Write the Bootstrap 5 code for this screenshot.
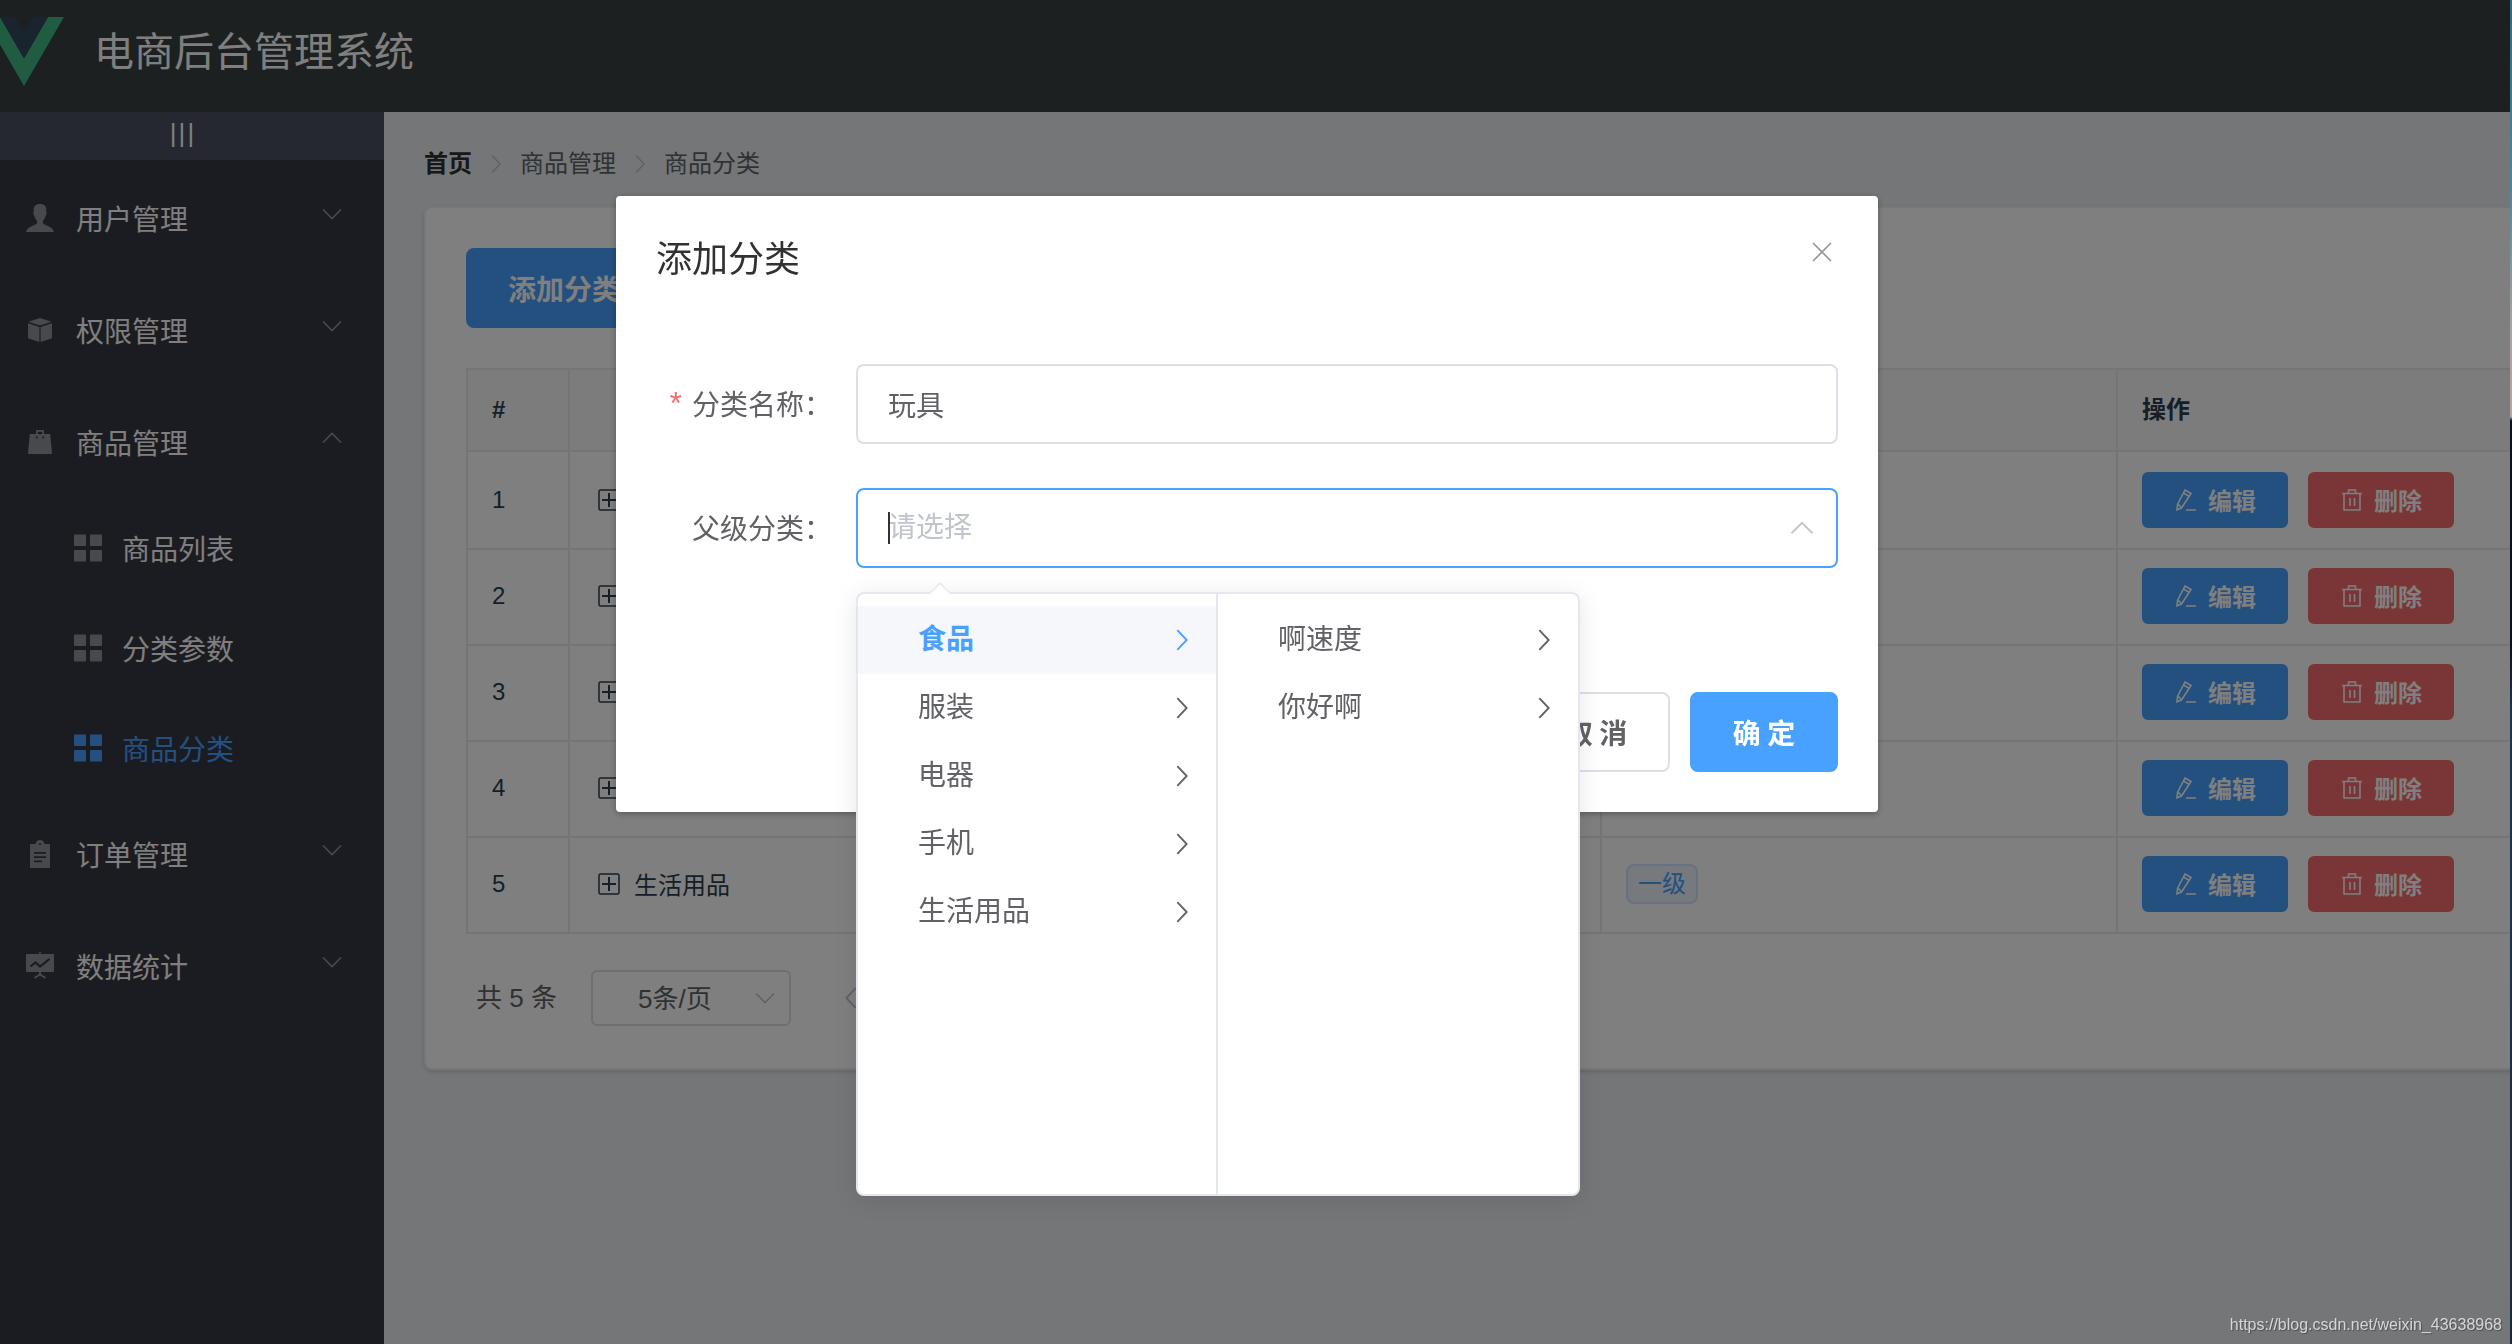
<!DOCTYPE html>
<html lang="zh-CN">
<head>
<meta charset="utf-8">
<meta name="viewport" content="width=device-width, initial-scale=1">
<title>电商后台管理系统</title>
<link rel="stylesheet" href="https://cdn.jsdelivr.net/npm/bootstrap@5.3.0/dist/css/bootstrap.min.css">
<style>
  :root {
    --el-primary: #48a0ff;
    --el-danger: #f56c6c;
    --el-muted: #909399;
    --el-text: #606266;
    --el-border: #dcdfe6;
    --cjk: "Noto Sans CJK SC", sans-serif;
  }
  body {
    font-family: "Liberation Sans", "Noto Sans CJK SC", sans-serif;
    font-size: 28px;
    line-height: 40px;
    color: #2c3e50;
    overflow: hidden;
  }
  svg { display: block; flex: none; }
  .line-icon { fill: none; stroke: currentColor; stroke-width: 1.6; }
  a { text-decoration: none; }

  /* frame */
  .app-page { background: #eaedf1; }
  .app-header { height: 112px; background: #3a4041; color: #fff; font-family: var(--cjk); font-size: 40px; line-height: 36px; gap: 30px; padding-bottom: 10px; overflow: hidden; }
  .app-logo { margin-left: -16px; }
  .app-aside { width: 384px; flex: none; background: #363842; font-family: var(--cjk); }
  .aside-toggle { height: 48px; background: #4a5060; color: #fff; font-family: "Liberation Sans", sans-serif; font-size: 26px; line-height: 42px; gap: 2px; border: 0; padding: 0 20px 0 0; }
  .app-main { padding: 30px 40px; min-width: 0; overflow: hidden; }

  /* side menu */
  .side-link { height: 112px; padding: 4px 40px 0 16px; color: #fff; }
  .side-link .side-icon { width: 48px; margin-right: 12px; color: var(--el-muted); display: flex; justify-content: center; }
  .side-link .side-arrow { color: var(--el-muted); margin: 0 0 8px auto; }
  .side-sub .side-link { height: 100px; padding-left: 64px; }
  .side-sub .side-link .side-icon { margin-right: 10px; }
  .side-link.active, .side-link.active .side-icon { color: var(--el-primary); }

  /* content */
  .crumbs { font-size: 24px; line-height: 24px; margin: 10px 0 30px; gap: 12px; color: var(--el-text); }
  .crumbs a { color: #303133; font-weight: 700; }
  .crumbs svg { color: #c0c4cc; }
  .list-card { border: 2px solid #ebeef5; border-radius: 8px; padding: 40px 40px 42px; width: max-content; background: #fff; box-shadow: 0 2px 4px rgba(0,0,0,.15); }
  .el-btn { --bs-btn-font-family: var(--cjk); --bs-btn-font-size: 28px; --bs-btn-line-height: 36px; --bs-btn-padding-x: 40px; --bs-btn-padding-y: 20px; --bs-btn-border-width: 2px; --bs-btn-border-radius: 8px; --bs-btn-font-weight: 700; }
  .el-btn-sm { --bs-btn-font-size: 24px; --bs-btn-line-height: 24px; --bs-btn-padding-x: 30px; --bs-btn-padding-y: 14px; --bs-btn-border-radius: 6px; gap: 10px; }
  .row-actions { gap: 20px; }
  .btn-main { --bs-btn-bg: var(--el-primary); --bs-btn-border-color: var(--el-primary); --bs-btn-color: #fff; --bs-btn-hover-bg: #66b1ff; --bs-btn-hover-color: #fff; }
  .btn-del { --bs-btn-bg: var(--el-danger); --bs-btn-border-color: var(--el-danger); --bs-btn-color: #fff; --bs-btn-hover-bg: #f78989; --bs-btn-hover-color: #fff; }
  .btn-plain { --bs-btn-bg: #fff; --bs-btn-border-color: var(--el-border); --bs-btn-color: var(--el-text); }

  .cate-table { table-layout: fixed; width: 2170px; margin: 40px 0 36px; border: 2px solid #e8eaec; border-collapse: separate; border-spacing: 0; font-size: 24px; line-height: 36px; }
  .cate-table th, .cate-table td { padding: 0 24px; vertical-align: middle; border-right: 2px solid #e8eaec; }
  .cate-table th { height: 82px; background: #f8f8f9; border-bottom: 2px solid #e8eaec; }
  .cate-table td { height: 96px; }
  .cate-table tr + tr td { border-top: 2px solid #e8eaec; padding-bottom: 2px; }
  .cate-name { font-family: var(--cjk); gap: 14px; padding-left: 4px; }
  .col-num { width: 102px; }
  .level-tag { display: block; width: max-content; height: 40px; line-height: 36px; padding: 0 10px; border: 2px solid #d0e5ff; border-radius: 8px; background: #ecf5ff; color: var(--el-primary); }
  .pager { font-size: 26px; line-height: 54px; color: var(--el-text); padding-left: 10px; gap: 34px; height: 56px; }
  .size-picker { width: 200px; height: 56px; border: 2px solid var(--el-border); border-radius: 6px; }
  .size-picker select { appearance: none; border: 0; background: none; display: block; width: 100%; height: 50px; padding: 0 32px 0 0; text-align: center; text-align-last: center; color: var(--el-text); font-size: 26px; }
  .size-picker svg { position: absolute; right: 12px; top: 14px; color: #c0c4cc; pointer-events: none; }
  .page-btn { border: 0; background: none; padding: 0 12px; color: #c0c4cc; }

  /* dialog */
  .modal-backdrop.show { opacity: .5; }
  .cate-modal { padding-right: 18px; }
  .cate-modal .modal-dialog { max-width: 1262px; margin: 196px auto; }
  .cate-modal .modal-content { border: 0; border-radius: 4px; box-shadow: 0 2px 6px rgba(0,0,0,.3); color: var(--el-text); }
  .cate-modal .modal-header { padding: 40px 40px 20px; border: 0; align-items: flex-start; }
  .cate-modal .modal-title { font-size: 36px; line-height: 48px; color: #303133; font-weight: 400; }
  .modal-x { border: 0; background: none; padding: 0; color: var(--el-muted); margin: 4px 4px 0 0; }
  .cate-modal .modal-body { padding: 60px 40px; }
  .cate-modal .modal-footer { padding: 20px 40px 40px; border: 0; gap: 20px; }
  .cate-modal .modal-footer > * { margin: 0; }
  .cate-modal .modal-footer .btn { min-width: 148px; }
  .field-row { margin-bottom: 44px; }
  .field-label { width: 200px; padding-right: 24px; line-height: 78px; gap: 10px; font-family: var(--cjk); }
  .field-label .must { color: var(--el-danger); font-family: "Liberation Sans", sans-serif; font-size: 32px; }
  .field-input { height: 80px; padding: 0 30px; border: 2px solid var(--el-border); border-radius: 8px; font-size: 28px; color: var(--el-text); }
  .field-input::placeholder { color: #c0c4cc; }
  .field-input.is-open { border-color: var(--el-primary); }
  .field-arrow { position: absolute; right: 22px; top: 26px; color: #c0c4cc; }
  .field-caret { position: absolute; left: 32px; top: 24px; width: 2px; height: 32px; background: #303133; }

  /* cascader popup */
  .cascader { position: absolute; top: 104px; left: 0; border: 2px solid #e4e7ed; border-radius: 8px; background: #fff; box-shadow: 0 4px 24px rgba(0,0,0,.1); }
  .cascader-tip { position: absolute; left: 72px; top: -12px; }
  .cascader-col { width: 360px; height: 600px; padding-top: 12px; }
  .cascader-col:first-of-type { border-right: 2px solid #e4e7ed; }
  .cascader-item { height: 68px; padding: 0 20px 0 60px; color: var(--el-text); }
  .cascader-item.active { background: #f5f7fa; color: var(--el-primary); font-weight: 700; }

  .site-mark { position: fixed; right: 10px; bottom: 5px; z-index: 2000; font-size: 16px; line-height: 28px; color: rgba(255,255,255,.72); text-shadow: 1px 1px 1px rgba(0,0,0,.35); }
  .desk-edge { position: fixed; top: 0; right: 0; bottom: 0; width: 2px; z-index: 2001; background: linear-gradient(#2f6f80 0, #4c8794 14%, #a8a3a2 24%, #b5a5a0 31%, #07131c 31.3%, #07131c 48%, #22344c 53%, #1a2a3e 100%); }
</style>
</head>
<body>
<svg class="d-none" xmlns="http://www.w3.org/2000/svg">
  <symbol id="i-down" viewBox="0 0 24 24"><path d="M3 7.500l9 9 9-9"/></symbol>
  <symbol id="i-up" viewBox="0 0 24 24"><path d="M3 16.500l9-9 9 9"/></symbol>
  <symbol id="i-right" viewBox="0 0 24 24"><path d="M8 3.500l8 8.500-8 8.500"/></symbol>
  <symbol id="i-left" viewBox="0 0 24 24"><path d="M16 3.500L8 12l8 8.500"/></symbol>
  <symbol id="i-user" viewBox="0 0 28 28"><path fill="currentColor" d="M14 0c4 0 6.300 2 6.300 6 0 1.500-.1 2 .3 3 .3 1.500-.8 2.500-1.200 3.500-.5 2-1.400 3.200-2.400 4.500v2.300c1.800 2.200 9.300 2.700 11 8.700H0c1.700-6 9.200-6.500 11-8.700V17c-1-1.300-1.900-2.500-2.400-4.500C8.200 11.500 7.100 10.500 7.400 9c.4-1 .3-1.500.3-3 0-4 2.300-6 6.300-6z"/></symbol>
  <symbol id="i-box" viewBox="0 0 28 28"><path fill="currentColor" d="M14 2l11.500 3.800L14 9.600 2.500 5.800zM2 7.300l11.400 3.800V26L2 22.300zM26 7.300v15l-11.400 3.700V11.100z"/></symbol>
  <symbol id="i-bag" viewBox="0 0 28 28"><path fill="currentColor" fill-rule="evenodd" d="M10 6V2h8v4h6.200L26 24.500c0 1-.5 1.500-1.500 1.500h-21C2.500 26 2 25.500 2 24.500L3.800 6zm1.800-2.200V6h4.400V3.800zM9.800 8.500v1.800h2V8.500zm6.400 0v1.800h2V8.500z"/></symbol>
  <symbol id="i-grid" viewBox="0 0 28 28"><g fill="currentColor"><rect width="12" height="11.500" x="0" y=".5" rx="1"/><rect width="12" height="11.500" x="16" y=".5" rx="1"/><rect width="12" height="11.500" x="0" y="16" rx="1"/><rect width="12" height="11.500" x="16" y="16" rx="1"/></g></symbol>
  <symbol id="i-order" viewBox="0 0 28 28"><path fill="currentColor" fill-rule="evenodd" d="M9.500 4C10 1.500 12 0 14 0s4 1.500 4.500 4H23c.6 0 1 .4 1 1v22c0 .6-.4 1-1 1H5c-.6 0-1-.4-1-1V5c0-.6.4-1 1-1zM13 3v1.800h2V3zM8 12v1.800h12V12zm0 4.300V18h12v-1.700zm0 4.200v1.800h8v-1.800z"/></symbol>
  <symbol id="i-chart" viewBox="0 0 28 28"><path fill="currentColor" d="M13.200 0h1.600v2H27c.6 0 1 .4 1 1v16c0 .6-.4 1-1 1H1c-.6 0-1-.4-1-1V3c0-.6.4-1 1-1h12.200z"/><path fill="none" stroke="#363842" stroke-width="2.200" d="M4.500 14.500l5-4 4.500 4L23.500 7"/><path fill="none" stroke="currentColor" stroke-width="2" d="M14 20v2.500M8.500 26L14 22.500l5.500 3.500"/></symbol>
  <symbol id="i-edit" viewBox="0 0 24 24"><path d="M11 2l6 3.500L7.500 20 3 21.800l.6-5.600zM9 4.800l6 3.500M3.800 16.200L7.500 19.500M12 22h10"/></symbol>
  <symbol id="i-trash" viewBox="0 0 24 24"><path d="M2 5.500h20M4 5.500V22h16V5.500M8.500 5.500V2h7v3.500M10 10v8M14.500 10v8"/></symbol>
  <symbol id="i-plus" viewBox="0 0 22 22"><rect x="1" y="1" width="20" height="20" rx="1.500" stroke-width="1.500"/><path stroke-width="2" d="M4 11h14M11 4v14"/></symbol>
</svg>

<div class="app-page d-flex flex-column vh-100">
  <header class="app-header d-flex align-items-center">
    <svg class="app-logo" width="80" height="69" viewBox="0 0 400 345"><path fill="#41b883" d="M0 0l200 345L400 0h-80L200 207 80 0z"/><path fill="#35495e" d="M80 0l120 207L320 0h-74l-46 78-46-78z"/></svg>
    <span class="pb-1">电商后台管理系统</span>
  </header>
  <div class="d-flex flex-grow-1">
    <aside class="app-aside">
      <button class="aside-toggle d-flex justify-content-center w-100" type="button" aria-label="折叠菜单"><span>|</span><span>|</span><span>|</span></button>
      <nav>
        <a href="#" class="side-link d-flex align-items-center"><span class="side-icon"><svg width="28" height="28"><use href="#i-user"/></svg></span>用户管理<svg class="side-arrow line-icon" width="24" height="24"><use href="#i-down"/></svg></a>
        <a href="#" class="side-link d-flex align-items-center"><span class="side-icon"><svg width="28" height="28"><use href="#i-box"/></svg></span>权限管理<svg class="side-arrow line-icon" width="24" height="24"><use href="#i-down"/></svg></a>
        <a href="#" class="side-link d-flex align-items-center"><span class="side-icon"><svg width="28" height="28"><use href="#i-bag"/></svg></span>商品管理<svg class="side-arrow line-icon" width="24" height="24"><use href="#i-up"/></svg></a>
        <div class="side-sub">
          <a href="#" class="side-link d-flex align-items-center"><span class="side-icon"><svg width="28" height="28"><use href="#i-grid"/></svg></span>商品列表</a>
          <a href="#" class="side-link d-flex align-items-center"><span class="side-icon"><svg width="28" height="28"><use href="#i-grid"/></svg></span>分类参数</a>
          <a href="#" class="side-link active d-flex align-items-center"><span class="side-icon"><svg width="28" height="28"><use href="#i-grid"/></svg></span>商品分类</a>
        </div>
        <a href="#" class="side-link d-flex align-items-center"><span class="side-icon"><svg width="28" height="28"><use href="#i-order"/></svg></span>订单管理<svg class="side-arrow line-icon" width="24" height="24"><use href="#i-down"/></svg></a>
        <a href="#" class="side-link d-flex align-items-center"><span class="side-icon"><svg width="28" height="28"><use href="#i-chart"/></svg></span>数据统计<svg class="side-arrow line-icon" width="24" height="24"><use href="#i-down"/></svg></a>
      </nav>
    </aside>

    <main class="app-main flex-grow-1">
      <nav class="crumbs d-flex align-items-center">
        <a href="#">首页</a><svg class="line-icon" width="24" height="24"><use href="#i-right"/></svg><span>商品管理</span><svg class="line-icon" width="24" height="24"><use href="#i-right"/></svg><span>商品分类</span>
      </nav>
      <section class="list-card">
        <button type="button" class="btn el-btn btn-main">添加分类</button>
        <table class="cate-table">
          <colgroup><col class="col-num"><col><col><col><col></colgroup>
          <thead><tr><th>#</th><th><span class="visually-hidden">分类名称</span></th><th>是否有效</th><th>排序</th><th>操作</th></tr></thead>
          <tbody id="rows"></tbody>
        </table>
        <div class="pager d-flex align-items-center">
          <span>共 5 条</span>
          <div class="size-picker position-relative"><select aria-label="每页条数"><option>5条/页</option><option>10条/页</option></select><svg class="line-icon" width="24" height="24"><use href="#i-down"/></svg></div>
          <button class="page-btn" type="button" aria-label="上一页"><svg class="line-icon" width="28" height="28"><use href="#i-left"/></svg></button>
          <button class="page-btn" type="button">1</button>
        </div>
      </section>
    </main>
  </div>
</div>

<div class="modal-backdrop show"></div>
<div class="modal cate-modal d-block" tabindex="-1" role="dialog" aria-labelledby="dlg-title">
  <div class="modal-dialog">
    <div class="modal-content">
      <div class="modal-header">
        <h5 class="modal-title" id="dlg-title">添加分类</h5>
        <button type="button" class="modal-x" aria-label="关闭"><svg class="line-icon" width="24" height="24" viewBox="0 0 24 24"><path d="M3 3l18 18M21 3L3 21"/></svg></button>
      </div>
      <div class="modal-body">
        <div class="field-row d-flex">
          <label class="field-label d-flex justify-content-end" for="cate-name"><span class="must">*</span><span>分类名称：</span></label>
          <div class="flex-grow-1"><input id="cate-name" type="text" class="form-control field-input" value="玩具"></div>
        </div>
        <div class="field-row d-flex">
          <label class="field-label d-flex justify-content-end" for="cate-parent">父级分类：</label>
          <div class="flex-grow-1 position-relative">
            <input id="cate-parent" type="text" class="form-control field-input is-open" placeholder="请选择" readonly>
            <span class="field-caret"></span>
            <svg class="field-arrow line-icon" width="28" height="28"><use href="#i-up"/></svg>
            <div class="cascader d-flex">
              <svg class="cascader-tip" width="20" height="12" viewBox="0 0 20 12"><path fill="#fff" d="M0 12L10 1l10 11z"/><path fill="none" stroke="#ebeef5" stroke-width="2" d="M0 11L10 1l10 10"/></svg>
              <div class="cascader-col">
                <a href="#" class="cascader-item active d-flex align-items-center justify-content-between">食品<svg class="line-icon" width="28" height="28"><use href="#i-right"/></svg></a>
                <a href="#" class="cascader-item d-flex align-items-center justify-content-between">服装<svg class="line-icon" width="28" height="28"><use href="#i-right"/></svg></a>
                <a href="#" class="cascader-item d-flex align-items-center justify-content-between">电器<svg class="line-icon" width="28" height="28"><use href="#i-right"/></svg></a>
                <a href="#" class="cascader-item d-flex align-items-center justify-content-between">手机<svg class="line-icon" width="28" height="28"><use href="#i-right"/></svg></a>
                <a href="#" class="cascader-item d-flex align-items-center justify-content-between">生活用品<svg class="line-icon" width="28" height="28"><use href="#i-right"/></svg></a>
              </div>
              <div class="cascader-col">
                <a href="#" class="cascader-item d-flex align-items-center justify-content-between">啊速度<svg class="line-icon" width="28" height="28"><use href="#i-right"/></svg></a>
                <a href="#" class="cascader-item d-flex align-items-center justify-content-between">你好啊<svg class="line-icon" width="28" height="28"><use href="#i-right"/></svg></a>
              </div>
            </div>
          </div>
        </div>
      </div>
      <div class="modal-footer">
        <button type="button" class="btn el-btn btn-plain">取 消</button>
        <button type="button" class="btn el-btn btn-main">确 定</button>
      </div>
    </div>
  </div>
</div>
<div class="site-mark">https://blog.csdn.net/weixin_43638968</div>
<div class="desk-edge"></div>

<script src="https://cdn.jsdelivr.net/npm/bootstrap@5.3.0/dist/js/bootstrap.bundle.min.js"></script>
<script>
  const names = ['食品', '服装', '电器', '手机', '生活用品'];
  document.getElementById('rows').innerHTML = names.map((name, i) => `
    <tr>
      <td>${i + 1}</td>
      <td><div class="cate-name d-flex align-items-center"><svg class="line-icon" width="22" height="22"><use href="#i-plus"/></svg>${name}</div></td>
      <td></td>
      <td><span class="level-tag">一级</span></td>
      <td><div class="row-actions d-flex">
        <button type="button" class="btn el-btn el-btn-sm btn-main d-flex"><svg class="line-icon" width="24" height="24"><use href="#i-edit"/></svg>编辑</button>
        <button type="button" class="btn el-btn el-btn-sm btn-del d-flex"><svg class="line-icon" width="24" height="24"><use href="#i-trash"/></svg>删除</button>
      </div></td>
    </tr>`).join('');
</script>
</body>
</html>
